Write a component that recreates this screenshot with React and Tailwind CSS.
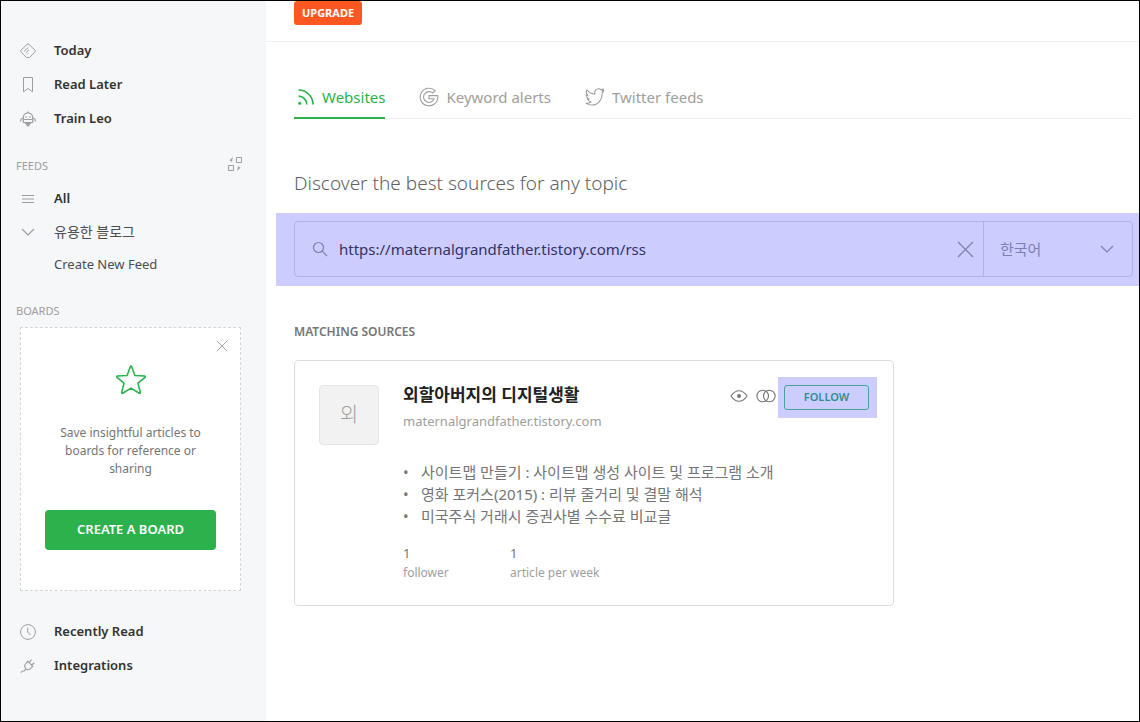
import React, { useState } from 'react';

const TodayIcon = () => (
  <svg width="16" height="16" viewBox="0 0 16 16" fill="none" stroke="currentColor" strokeWidth="1" aria-hidden="true">
    <path d="M7 1.4.9 7.3a1 1 0 0 0 0 1.4l5 5.3q.5.5 1.2.5h1.8q.7 0 1.2-.5l5-5.3a1 1 0 0 0 0-1.4L9 1.4a1.4 1.4 0 0 0-2 0Z" />
    <path d="M4.3 8.3 8.3 4.4M5.700 10 9 6.800M7 11.700l1.200-1.200" />
  </svg>
);

const BookmarkIcon = () => (
  <svg width="16" height="16" viewBox="0 0 16 16" fill="none" stroke="currentColor" strokeWidth="1" aria-hidden="true">
    <path d="M3.5.5h9v14.3L8 11.5l-4.5 3.3Z" />
  </svg>
);

const LeoIcon = () => (
  <svg width="16" height="16" viewBox="0 0 16 16" fill="none" stroke="currentColor" strokeWidth="1.2" aria-hidden="true">
    <path d="M8 .5V2M3.3 11.5v-5a4.7 4.7 0 0 1 9.400 0v5ZM3.500 8.500h9M3 7Q.6 7.300.6 10.500M13 7q2.400.3 2.400 3.500" />
    <path d="M6 5.300V7M10 5.300V7" strokeWidth="1" />
    <path d="M5.500 12h5L8 15Z" fill="currentColor" />
  </svg>
);

const OrganizeIcon = () => (
  <svg width="14" height="14" viewBox="0 0 14 14" fill="none" stroke="currentColor" strokeWidth="1" aria-hidden="true">
    <path d="M8.500.500h5v5h-5ZM.500 8.500h5v5h-5Z" />
    <path d="M4.500.500Q4.500 3 2.500 3M3.800 1.800v2.700L1.800 3.200ZM9.500 13.500q0-2.500 2-2.500M10.200 12.200V9.500l2 1.300Z" fill="currentColor" strokeWidth=".6" />
  </svg>
);

const MenuIcon = () => (
  <svg width="16" height="16" viewBox="0 0 16 16" stroke="currentColor" strokeWidth="1" aria-hidden="true">
    <path d="M2 4.5h12M2 8h12M2 11.5h12" />
  </svg>
);

const ChevronIcon = ({ className }) => (
  <svg width="16" height="16" viewBox="0 0 16 16" fill="none" stroke="currentColor" strokeWidth="1.2" className={className} aria-hidden="true">
    <path d="m2 5 6 6 6-6" />
  </svg>
);

const CloseIcon = ({ size }) => (
  <svg width={size} height={size} viewBox="0 0 16 16" stroke="currentColor" strokeWidth="1.2" aria-hidden="true">
    <path d="m1 1 14 14M15 1 1 15" />
  </svg>
);

const ClockIcon = () => (
  <svg width="16" height="16" viewBox="0 0 16 16" fill="none" stroke="currentColor" strokeWidth="1" aria-hidden="true">
    <circle cx="8" cy="8" r="7.4" />
    <path d="M7.700 3.500V8l2.800 3" />
  </svg>
);

const PlugIcon = () => (
  <svg width="16" height="16" viewBox="0 0 16 16" fill="none" stroke="currentColor" strokeWidth="1.1" aria-hidden="true">
    <path d="M.8 14.600 2 13.300q.6-.5 1.300-.3.700.1 1.200-.4L6 11.100M7.200 2.700l6 6M8 3.500 5.800 5.600a3.700 3.700 0 0 0 0 5 3.500 3.500 0 0 0 4.800 0l2-2.200M9.300 4.700l2.200-3M11.700 7l2.800-2.200" />
  </svg>
);

const StarIcon = () => (
  <svg width="32" height="32" viewBox="0 0 32 32" fill="none" stroke="currentColor" strokeWidth="1.600" strokeLinejoin="round" aria-hidden="true">
    <path d="M15.3 2.700q.7-1.100 1.400 0l3.200 8.800 9.600.5q1.200.3.5 1.300l-7 5.900 2.300 9.200q.1 1.200-1 .8L16 24.100l-8.300 5.100q-1.100.4-1-.8L9 19.200l-7-5.900q-.7-1 .5-1.300l9.600-.5Z" />
  </svg>
);

const RssIcon = () => (
  <svg width="18" height="18" viewBox="0 0 18 18" fill="none" stroke="currentColor" strokeWidth="1.700" aria-hidden="true">
    <path d="M1.500 2A14.500 14.500 0 0 1 16 16.500M1.500 8.200a8.300 8.300 0 0 1 8.300 8.300" />
    <circle cx="2.800" cy="15.200" r="1.500" fill="currentColor" stroke="none" />
  </svg>
);

const GoogleIcon = () => (
  <svg width="20" height="20" viewBox="0 0 20 20" fill="none" stroke="currentColor" strokeWidth="1.100" strokeLinejoin="round" aria-hidden="true">
    <path d="M16.200 3.800A8.800 8.800 0 1 0 18.800 10V8.600H10v3.200h5.100A5.400 5.400 0 1 1 13.600 6Z" />
  </svg>
);

const TwitterIcon = () => (
  <svg width="20" height="20" viewBox="0 0 20 20" fill="none" stroke="currentColor" strokeWidth="1.100" strokeLinejoin="round" aria-hidden="true">
    <path d="M18.800 3.500q-.6 1.500-1.700 2.300C17.600 12.800 12.800 18 6.700 18q-3 0-5.500-1.600 2.900.1 4.800-1.500-2.600-.4-3.500-2.800h1.600Q1.500 11 1.200 8l1.600.4Q.4 6.300 1.900 2.900 5 6.900 9.800 7.100C9.200 3.500 11.300 1.700 13.500 1.700q1.700 0 2.600 1.100l2.300-.9-1.300 2Z" />
  </svg>
);

const SearchIcon = () => (
  <svg width="16" height="16" viewBox="0 0 16 16" fill="none" stroke="currentColor" strokeWidth="1.200" aria-hidden="true">
    <circle cx="6.500" cy="6.500" r="5" />
    <path d="m10.200 10.200 4.800 4.800" />
  </svg>
);

const EyeIcon = () => (
  <svg width="18" height="18" viewBox="0 0 18 18" fill="none" stroke="currentColor" strokeWidth="1.100" aria-hidden="true">
    <path d="M1 9q3.600-5.300 8-5.300T17 9q-3.600 5.300-8 5.300T1 9Z" />
    <circle cx="9" cy="9" r="2" fill="currentColor" stroke="none" />
  </svg>
);

const SimilarIcon = () => (
  <svg width="20" height="18" viewBox="0 0 20 18" fill="none" stroke="currentColor" strokeWidth="1.100" aria-hidden="true">
    <circle cx="6.700" cy="9" r="5.800" />
    <circle cx="13.300" cy="9" r="5.800" />
  </svg>
);

const NavItem = ({ icon, label, rowClass = 'h-[34px] text-[13px] font-semibold text-[#333]' }) => (
  <a href="#" className={`flex items-center pl-[19px] ${rowClass}`}>
    <span className="mr-[18px] flex w-4 shrink-0 justify-center text-[#9e9e9e]">{icon}</span>
    {label}
  </a>
);

const tabs = [
  { id: 'websites', label: 'Websites', icon: <RssIcon /> },
  { id: 'keywords', label: 'Keyword alerts', icon: <GoogleIcon /> },
  { id: 'twitter', label: 'Twitter feeds', icon: <TwitterIcon /> },
];

const articles = [
  '사이트맵 만들기 : 사이트맵 생성 사이트 및 프로그램 소개',
  '영화 포커스(2015) : 리뷰 줄거리 및 결말 해석',
  '미국주식 거래시 증권사별 수수료 비교글',
];

const stats = [
  { value: 1, label: 'follower' },
  { value: 1, label: 'article per week' },
];

const Sidebar = () => (
  <aside className="w-[265px] shrink-0 border-r border-[#f3f4f5] bg-[#f6f7f9] pt-[33px]">
    <nav>
      <NavItem icon={<TodayIcon />} label="Today" />
      <NavItem icon={<BookmarkIcon />} label="Read Later" />
      <NavItem icon={<LeoIcon />} label="Train Leo" />

      <div className="mt-3.5 flex h-8 items-center justify-between pr-[23px] pl-[15px] text-[#9e9e9e]">
        <h2 className="text-[11px]">FEEDS</h2>
        <button type="button" aria-label="Organize feeds" className="pb-1">
          <OrganizeIcon />
        </button>
      </div>
      <NavItem icon={<MenuIcon />} label="All" rowClass="h-[33px] text-[13px] font-semibold text-[#333]" />
      <NavItem icon={<ChevronIcon />} label="유용한 블로그" rowClass="h-[33px] text-sm text-[#4d4d4d]" />
      <NavItem label="Create New Feed" rowClass="h-[33px] text-[13px] text-[#4d4d4d]" />
    </nav>

    <h2 className="mt-3.5 flex h-8 items-center pl-[15px] text-[11px] text-[#9e9e9e]">BOARDS</h2>
    <section className="relative mr-6 ml-[19px] flex flex-col items-center border border-dashed border-[#d5d5d5] bg-white px-6 pt-9 pb-10 text-center">
      <button type="button" aria-label="Close" className="absolute top-3 right-3 text-[#9e9e9e]">
        <CloseIcon size={12} />
      </button>
      <span className="text-[#2bb24c]">
        <StarIcon />
      </span>
      <p className="mt-7 px-3 text-xs leading-[18px] text-[#757575]">
        Save insightful articles to boards for reference or sharing
      </p>
      <button type="button" className="mt-8 h-10 w-full rounded bg-[#2bb24c] text-[13px] font-semibold text-white">
        CREATE A BOARD
      </button>
    </section>

    <nav className="mt-6">
      <NavItem icon={<ClockIcon />} label="Recently Read" />
      <NavItem icon={<PlugIcon />} label="Integrations" />
    </nav>
  </aside>
);

const SourceCard = () => (
  <article className="mt-[18px] flex max-w-[600px] rounded border border-[#dedede] px-6 pt-6 pb-[22px]">
    <div className="flex h-[60px] w-[60px] shrink-0 items-center justify-center rounded border border-[#e6e6e6] bg-[#f2f2f2] text-xl font-light text-[#9e9e9e]">
      외
    </div>
    <div className="ml-6 min-w-0 grow">
      <div className="flex justify-between">
        <div>
          <h3 className="text-[17px] leading-5 font-semibold text-[#212121]">외할아버지의 디지털생활</h3>
          <p className="mt-1 text-[13px] leading-6 text-[#9e9e9e]">maternalgrandfather.tistory.com</p>
        </div>
        <div className="-mt-2 -mr-2 flex h-[41px] items-center text-[#757575]">
          <button type="button" aria-label="Preview" className="pb-1">
            <EyeIcon />
          </button>
          <button type="button" aria-label="Similar sources" className="mr-[2px] ml-2 pb-1">
            <SimilarIcon />
          </button>
          <span className="bg-[#ccccff] py-2 pr-2 pl-1.5">
            <button type="button" className="block h-[25px] w-[85px] rounded-[3px] border border-[#4aa396] text-[11px] font-semibold text-[#2f8f8f]">
              FOLLOW
            </button>
          </span>
        </div>
      </div>
      <ul className="mt-7 list-none text-[15px] leading-[22px] text-[#757575]">
        {articles.map((title) => (
          <li key={title} className="flex">
            <span className="w-[18px] shrink-0">•</span>
            {title}
          </li>
        ))}
      </ul>
      <dl className="mt-4 flex">
        {stats.map((stat) => (
          <div key={stat.label} className="flex w-[107px] flex-col-reverse whitespace-nowrap">
            <dt className="text-xs leading-5 text-[#9e9e9e]">{stat.label}</dt>
            <dd className="text-[13px] leading-5 text-[#757575]">{stat.value}</dd>
          </div>
        ))}
      </dl>
    </div>
  </article>
);

const App = () => {
  const [activeTab, setActiveTab] = useState('websites');
  const [query, setQuery] = useState('https://maternalgrandfather.tistory.com/rss');

  return (
    <div className="flex min-h-screen border border-black bg-white font-['Noto_Sans','Noto_Sans_CJK_KR',sans-serif]">
      <Sidebar />
      <main className="min-w-0 grow">
        <header className="flex h-[41px] items-start border-b border-[#efefef] pl-7">
          <button type="button" className="h-6 rounded-[3px] bg-[#ff5722] px-2 text-[11px] font-bold text-white">
            UPGRADE
          </button>
        </header>

        <div className="mt-9 mr-1.5 ml-7 flex gap-[34px] border-b border-[#efefef]" role="tablist">
          {tabs.map((tab) => (
            <button
              key={tab.id}
              type="button"
              role="tab"
              aria-selected={activeTab === tab.id}
              onClick={() => setActiveTab(tab.id)}
              className={`-mb-px flex h-[41px] items-center gap-[7px] border-b-2 pb-px text-[15px] ${
                activeTab === tab.id ? 'border-[#2bb24c] pl-[3px] text-[#2bb24c]' : 'border-transparent text-[#9e9e9e]'
              }`}
            >
              {tab.icon}
              {tab.label}
            </button>
          ))}
        </div>

        <h1 className="mt-12 ml-7 text-[19px] leading-8 font-light text-[#616161]">Discover the best sources for any topic</h1>

        <form className="mt-3.5 ml-2.5 bg-[#ccccff] pt-2 pr-1.5 pb-[9px] pl-[18px]" onSubmit={(e) => e.preventDefault()}>
          <div className="flex h-14 rounded border border-[#b3b3e0] text-[#7f7fb2]">
            <label className="flex grow items-center pl-[17px]">
              <SearchIcon />
              <input
                type="text"
                aria-label="Search sources"
                value={query}
                onChange={(e) => setQuery(e.target.value)}
                className="ml-[11px] grow bg-transparent text-[15px] text-[#333366] outline-none"
              />
            </label>
            <button type="button" aria-label="Clear" onClick={() => setQuery('')} className="px-[9px]">
              <CloseIcon size={17} />
            </button>
            <div className="relative flex w-[149px] items-center border-l border-[#b3b3e0]">
              <select aria-label="Language" className="h-full w-full appearance-none bg-transparent pl-4 text-[15px] outline-none">
                <option>한국어</option>
              </select>
              <ChevronIcon className="pointer-events-none absolute right-[17px]" />
            </div>
          </div>
        </form>

        <section className="mt-9 mr-6 ml-7">
          <h2 className="text-xs leading-5 font-semibold text-[#757575]">MATCHING SOURCES</h2>
          <SourceCard />
        </section>
      </main>
    </div>
  );
};

export default App;
